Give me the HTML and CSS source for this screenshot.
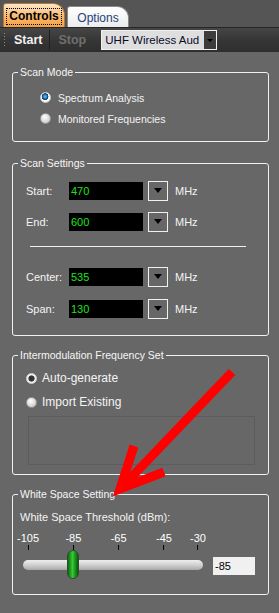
FILE: index.html
```html
<!DOCTYPE html>
<html lang="en">
<head>
    <meta charset="UTF-8">
    <meta name="viewport" content="width=device-width, initial-scale=1.0">
    <title>Scanner Controls</title>
    <link rel="stylesheet" href="styles.css">
</head>
<body>
    <!-- Tab strip -->
    <div class="tabstrip">
        <div class="tab tab-active"><span class="focus">Controls</span></div>
        <div class="tab">Options</div>
    </div>

    <!-- Toolbar -->
    <div class="toolbar">
        <span class="grip"></span>
        <span class="tool-btn">Start</span>
        <span class="tool-sep"></span>
        <span class="tool-btn disabled">Stop</span>
        <div class="combo">
            <span class="combo-text">UHF Wireless Aud</span>
            <span class="combo-arrow"><span class="tri"></span></span>
        </div>
    </div>

    <fieldset class="group group-mode">
        <legend>Scan Mode</legend>
        <div class="radio-list">
            <label class="radio-row"><span class="radio radio-blue"></span>Spectrum Analysis</label>
            <label class="radio-row"><span class="radio"></span>Monitored Frequencies</label>
        </div>
    </fieldset>

    <fieldset class="group group-settings">
        <legend>Scan Settings</legend>
        <div class="settings">
            <div class="field-row">
                <span class="field-label">Start:</span>
                <span class="field-input">470</span>
                <span class="field-btn"><span class="tri"></span></span>
                <span class="unit">MHz</span>
            </div>
            <div class="field-row">
                <span class="field-label">End:</span>
                <span class="field-input">600</span>
                <span class="field-btn"><span class="tri"></span></span>
                <span class="unit">MHz</span>
            </div>
            <div class="divider"></div>
            <div class="field-row">
                <span class="field-label">Center:</span>
                <span class="field-input">535</span>
                <span class="field-btn"><span class="tri"></span></span>
                <span class="unit">MHz</span>
            </div>
            <div class="field-row">
                <span class="field-label">Span:</span>
                <span class="field-input">130</span>
                <span class="field-btn"><span class="tri"></span></span>
                <span class="unit">MHz</span>
            </div>
        </div>
    </fieldset>

    <fieldset class="group group-imd">
        <legend>Intermodulation Frequency Set</legend>
        <div class="imd">
            <label class="radio-row big"><span class="radio radio-dark"></span>Auto-generate</label>
            <label class="radio-row big"><span class="radio"></span>Import Existing</label>
            <div class="import-box"></div>
        </div>
    </fieldset>

    <fieldset class="group group-ws">
        <legend>White Space Setting</legend>
        <div class="ws">
            <div class="ws-label">White Space Threshold (dBm):</div>
            <div class="scale">
                <div class="scale-inner">
                    <!-- left = (value + 105) / 75 -->
                    <div class="tick" style="left: 0%"><span>-105</span></div>
                    <div class="tick" style="left: 26.67%"><span>-85</span></div>
                    <div class="tick" style="left: 53.33%"><span>-65</span></div>
                    <div class="tick" style="left: 80%"><span>-45</span></div>
                    <div class="tick" style="left: 100%"><span>-30</span></div>
                </div>
            </div>
            <div class="slider-row">
                <div class="slider">
                    <div class="track"></div>
                    <div class="thumb-lane">
                        <div class="thumb" style="left: 26.67%"></div>
                    </div>
                </div>
                <div class="ws-value">-85</div>
            </div>
        </div>
    </fieldset>

    <!-- Red annotation arrow drawn over the screenshot -->
    <svg class="annotation" width="279" height="613" viewBox="0 0 279 613">
        <line x1="232" y1="372" x2="124" y2="485" stroke="#ff0000" stroke-width="9"/>
        <polyline points="134,446 120,489 164,472" fill="none" stroke="#ff0000" stroke-width="9" stroke-linejoin="miter"/>
    </svg>
</body>
</html>
```

FILE: styles.css
```css
html, body {
    margin: 0;
    padding: 0;
    background-color: #676767;
    color: #f4f4f4;
    font-family: "Liberation Sans", Arial, sans-serif;
    font-size: 11px;
}

body {
    position: relative;
    width: 279px;
    height: 613px;
    overflow: hidden;
}

/* Tabs */
.tabstrip {
    height: 27px;
    background-color: #555555;
    display: flex;
    align-items: flex-end;
    padding-left: 3px;
    gap: 2px;
    box-sizing: border-box;
}

.tab {
    height: 21px;
    width: 62px;
    box-sizing: border-box;
    border: 1px solid #8a8a8a;
    border-bottom: none;
    border-radius: 3px 12px 0 0;
    background: linear-gradient(#ffffff, #ececec);
    color: #27407a;
    font-size: 12px;
    display: flex;
    align-items: center;
    justify-content: center;
    padding-top: 1px;
}

.tab-active {
    height: 24px;
    width: 62px;
    background: linear-gradient(#fde6c6, #f8b870 55%, #f7a042);
    border-color: #b07838;
    color: #000000;
    font-weight: bold;
}

.focus {
    border: 1px dotted #000000;
    padding: 1px 2px;
    line-height: 13px;
}

/* Toolbar */
.toolbar {
    height: 24px;
    border-top: 1px solid #262626;
    background: linear-gradient(#464646, #363636 50%, #2e2e2e);
    display: flex;
    align-items: center;
    padding-left: 3px;
}

.grip {
    width: 3px;
    height: 16px;
    background-image: radial-gradient(circle, #8c8c8c 0.8px, transparent 1px);
    background-size: 3px 3px;
}

.tool-btn {
    padding: 0 5px;
    margin-left: 3px;
    font-size: 12.5px;
    font-weight: bold;
    color: #f0f0f0;
}

.tool-btn.disabled {
    color: #6f6f6f;
}

.tool-sep {
    width: 1px;
    height: 20px;
    background-color: #1e1e1e;
    margin-left: 2px;
}

.combo {
    margin-left: 10px;
    width: 116px;
    height: 20px;
    box-sizing: border-box;
    border: 1px solid #f0f0f0;
    background-color: #dedede;
    display: flex;
    align-items: center;
}

.combo-text {
    flex: 1;
    color: #0a0a2a;
    font-size: 11.5px;
    padding-left: 3px;
    white-space: nowrap;
    overflow: hidden;
}

.combo-arrow {
    width: 12px;
    height: 100%;
    background-color: #3c3c3c;
    display: flex;
    align-items: center;
    justify-content: center;
}

.tri {
    width: 0;
    height: 0;
    border-left: 3px solid transparent;
    border-right: 3px solid transparent;
    border-top: 3px solid #000000;
}

/* Group boxes */
.group {
    margin: 13px 10px 0 12px;
    padding: 0;
    border: 1px solid #f0f0f0;
    border-radius: 3px;
    min-width: 0;
}

.group legend {
    margin-left: 5px;
    padding: 0 2px;
    font-size: 10.5px;
    line-height: 14px;
    color: #f6f6f6;
}

.group-settings { margin-top: 14px; }
.group-imd { margin-top: 12px; }
.group-ws { margin-top: 12px; }

/* Radios */
.radio-list {
    padding: 8px 0 12px 27px;
}

.radio-row {
    display: flex;
    align-items: center;
    gap: 7px;
    height: 21px;
    font-size: 10.5px;
}

.radio-row.big {
    height: 24px;
    font-size: 12px;
    gap: 5px;
}

.radio {
    width: 11px;
    height: 11px;
    border-radius: 50%;
    box-sizing: border-box;
    border: 1px solid #9a9a9a;
    background: radial-gradient(circle at 40% 35%, #ffffff, #d8d8d8 60%, #b4b4b4);
}

.radio-blue {
    border-color: #d0d0d0;
    background: radial-gradient(circle at 45% 40%, #7fc4ee 0, #1a6aa8 2.2px, #0c3f70 3.2px, #ffffff 3.6px, #e4e4e4);
}

.radio-dark {
    border-color: #d8d8d8;
    background: radial-gradient(circle, #2c2c2c 0, #3a3a3a 2.8px, #f4f4f4 3.4px, #e0e0e0);
}

/* Scan settings */
.settings {
    padding: 11px 0 17px 13px;
}

.field-row {
    display: flex;
    align-items: center;
    height: 19px;
    margin-bottom: 12px;
}

.field-row:last-child {
    margin-bottom: 0;
}

.divider + .field-row {
    margin-top: 20px;
}

.divider + .field-row + .field-row {
    margin-top: 13px;
}

.field-label {
    width: 43px;
    font-size: 11px;
}

.field-input {
    width: 74px;
    height: 18px;
    background-color: #000000;
    color: #1ee21e;
    font-size: 11px;
    line-height: 18px;
    padding-left: 2px;
    box-sizing: border-box;
}

.field-btn {
    width: 20px;
    height: 20px;
    margin-left: 5px;
    box-sizing: border-box;
    border: 1px solid #f0f0f0;
    display: flex;
    align-items: center;
    justify-content: center;
}

.field-btn .tri {
    border-left-width: 4px;
    border-right-width: 4px;
    border-top-width: 5px;
}

.unit {
    margin-left: 7px;
    font-size: 11px;
}

.divider {
    height: 1px;
    width: 216px;
    margin: 15px 0 0 4px;
    background-color: #f0f0f0;
}

/* Intermod */
.imd {
    padding: 4px 0 9px 13px;
}

.import-box {
    margin: 2px 0 0 2px;
    width: 227px;
    height: 49px;
    box-sizing: border-box;
    border: 1px solid #5c5c5c;
}

/* White space */
.ws {
    padding: 9px 0 15px 0;
}

.ws-label {
    padding-left: 7px;
    line-height: 14px;
    font-size: 11px;
}

.scale {
    margin: 7px 0 0 10px;
    width: 180px;
}

.scale-inner {
    position: relative;
    margin: 0 5px;
    height: 19px;
}

.tick {
    position: absolute;
    top: 0;
    transform: translateX(-50%);
    display: flex;
    flex-direction: column;
    align-items: center;
}

.tick span {
    line-height: 14px;
    font-size: 11px;
    color: #ffffff;
}

.tick::after {
    content: "";
    width: 1px;
    height: 5px;
    background-color: #000000;
}

.slider-row {
    display: flex;
    align-items: center;
    margin-left: 10px;
    gap: 10px;
}

.slider {
    width: 180px;
    height: 29px;
    display: flex;
    align-items: center;
    position: relative;
}

.track {
    width: 100%;
    height: 10px;
    border-radius: 5px;
    background: linear-gradient(#eeeeee, #d0d0d0 50%, #a9a9a9);
}

.thumb-lane {
    position: absolute;
    top: 0;
    bottom: 0;
    left: 5px;
    right: 5px;
}

.thumb {
    position: absolute;
    top: 0;
    width: 12px;
    height: 29px;
    transform: translateX(-50%);
    box-sizing: border-box;
    border: 1px solid #2e4a2e;
    border-radius: 6px;
    background: linear-gradient(90deg, #0c6a0c, #36c836 45%, #1a9a1a 70%, #0a5a0a);
}

.ws-value {
    width: 42px;
    height: 18px;
    background-color: #f0f0f0;
    color: #000000;
    font-size: 11px;
    line-height: 18px;
    padding-left: 2px;
    box-sizing: border-box;
    margin-top: 3px;
}

/* Annotation */
.annotation {
    position: absolute;
    top: 0;
    left: 0;
    pointer-events: none;
}
```
